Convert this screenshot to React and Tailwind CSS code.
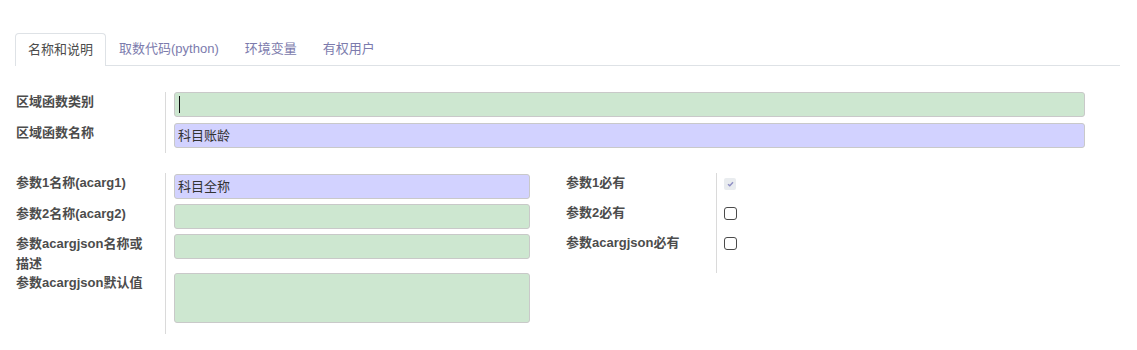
import React from "react";

const FONT = { fontFamily: '"Liberation Sans", "Noto Sans CJK SC", sans-serif' };

function Label({ children, w = "w-[150px]" }) {
  return (
    <div className={`${w} shrink-0 pl-px pr-[16px] text-[13px] font-bold leading-[19.5px] text-[#4c4c4c]`}>
      {children}
    </div>
  );
}

function Input({ color = "green", value, cursor, width = "w-full", h = "h-[25px]" }) {
  const bg = color === "green" ? "bg-[#cde7d0]" : "bg-[#d2d2ff]";
  return (
    <div
      className={`${width} ${h} ${bg} rounded-[3px] border border-[#c9c9c9] px-[3px] text-[13px] leading-[23px] text-[#333] flex items-start`}
    >
      {cursor && <span className="mt-[3px] ml-px h-[17px] w-px bg-[#111]" />}
      {value}
    </div>
  );
}

function Check({ disabled }) {
  if (disabled) {
    return (
      <div className="mt-[5px] flex h-[12px] w-[12px] items-center justify-center rounded-[2px] bg-[#e9ecef]">
        <svg width="7" height="6" viewBox="0 0 7 6">
          <path d="M1 3.2 L2.8 4.8 L6 1.2" stroke="#8f8fc4" strokeWidth="1.4" fill="none" />
        </svg>
      </div>
    );
  }
  return <div className="mt-[4px] h-[13px] w-[13px] rounded-[3px] border-[1.5px] border-[#4a4a4a]" />;
}

export default function App() {
  return (
    <div className="min-h-[350px] w-[1137px] bg-white" style={FONT}>
      <div className="ml-[15px] w-[1105px] pt-[33px]">
        {/* Tabs */}
        <div className="flex h-[33px] border-b border-[#dee2e6] text-[13px]">
          <div className="-mb-px flex h-[33px] items-center rounded-t-[4px] border border-b-0 border-[#dee2e6] bg-white px-[12px] text-[#4c4c4c]">
            名称和说明
          </div>
          <div className="flex items-center px-[13px] text-[#7c7bad]">取数代码(python)</div>
          <div className="flex items-center px-[13px] text-[#7c7bad]">环境变量</div>
          <div className="flex items-center px-[13px] text-[#7c7bad]">有权用户</div>
        </div>

        {/* Group 1 */}
        <div className="mt-[26px] flex flex-col">
          <div className="flex">
            <Label>区域函数类别</Label>
            <div className="w-[955px] border-l border-[#dadada] pl-2">
              <Input color="green" cursor width="w-[911px]" />
              <div className="h-[6px]" />
            </div>
          </div>
          <div className="flex">
            <Label>区域函数名称</Label>
            <div className="w-[955px] border-l border-[#dadada] pl-2 pb-[5px]">
              <Input color="purple" value="科目账龄" width="w-[911px]" h="h-[25px]" />
            </div>
          </div>
        </div>

        {/* Group 2 */}
        <div className="mt-[20px] flex">
          {/* left */}
          <div className="flex w-[551px] flex-col">
            <div className="flex">
              <Label>参数1名称(acarg1)</Label>
              <div className="flex-1 border-l border-[#dadada] pl-2 pt-px pb-[5px]">
                <Input color="purple" value="科目全称" width="w-[356px]" />
              </div>
            </div>
            <div className="flex">
              <Label>参数2名称(acarg2)</Label>
              <div className="flex-1 border-l border-[#dadada] pl-2 pb-[5px]">
                <Input color="green" width="w-[356px]" />
              </div>
            </div>
            <div className="flex">
              <Label>参数acargjson名称或描述</Label>
              <div className="flex-1 border-l border-[#dadada] pl-2 pb-[5px]">
                <Input color="green" width="w-[356px]" />
              </div>
            </div>
            <div className="flex">
              <Label>参数acargjson默认值</Label>
              <div className="flex-1 border-l border-[#dadada] pl-2 pb-[11px]">
                <Input color="green" width="w-[356px]" h="h-[50px]" />
              </div>
            </div>
          </div>
          {/* right */}
          <div className="-ml-px flex flex-col self-start">
            {[
              ["参数1必有", true],
              ["参数2必有", false],
              ["参数acargjson必有", false],
            ].map(([t, d], i) => (
              <div key={t} className={`flex ${i === 2 ? "h-[40px]" : "h-[30px]"}`}>
                <Label w="w-[151px]">
                  <div>{t}</div>
                </Label>
                <div className="w-[300px] border-l border-[#dadada] pl-[7px]">
                  <Check disabled={d} />
                </div>
              </div>
            ))}
          </div>
        </div>
      </div>
    </div>
  );
}
